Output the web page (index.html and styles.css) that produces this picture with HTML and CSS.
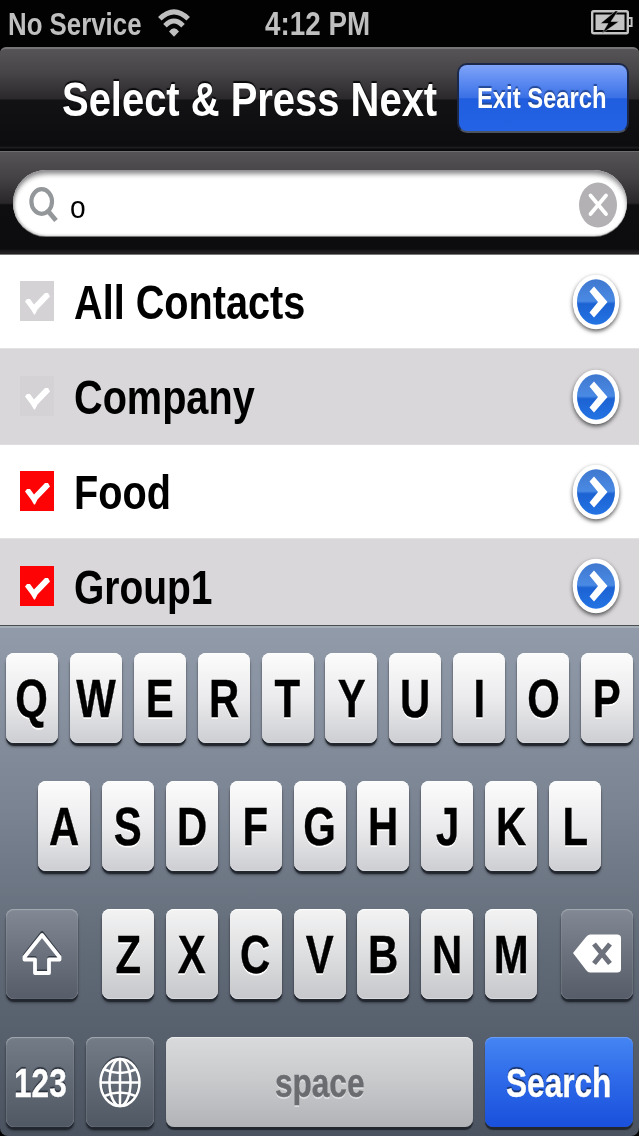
FILE: index.html
```html
<!DOCTYPE html>
<html lang="en">
<head>
<meta charset="utf-8">
<title>Select &amp; Press Next</title>
<link rel="stylesheet" href="styles.css">
</head>
<body>
<svg class="defs" aria-hidden="true">
  <defs>
    <linearGradient id="disc" x1="0" y1="0" x2="0" y2="1">
      <stop offset="0" stop-color="#3f78cf"/><stop offset=".48" stop-color="#4a8ae4"/>
      <stop offset=".54" stop-color="#1c62d3"/><stop offset="1" stop-color="#2474e4"/>
    </linearGradient>
    <symbol id="check" viewBox="0 0 34 40"><path d="M5 20.500l2-2.500h3l4 5.500 11-11.500h3l2 3.500-12.500 13-2.500 5h-1l-3-5z" fill="#fff"/></symbol>
    <symbol id="go" viewBox="0 0 56 66">
      <ellipse cx="28" cy="32" rx="23.3" ry="27.3" fill="#fff"/>
      <ellipse cx="28" cy="32" rx="19" ry="22.700" fill="url(#disc)"/>
      <path d="M21.500 21.500l4.500-5L39.500 32 26 47.500l-4.500-5L30 32z" fill="#fff"/>
    </symbol>
  </defs>
</svg>
<div class="screen">
  <header class="status">
    <span class="carrier"><span class="t">No Service</span></span>
    <svg class="wifi" viewBox="0 0 32 28"><g fill="none" stroke="#bfbfbf"><path d="M1.800 9.800Q16-4 30.200 9.800" stroke-width="5"/><path d="M7 16.700Q16 7.500 25 16.700" stroke-width="5"/></g><path d="M11 22.500Q16 16 21 22.500L16 27.800z" fill="#bfbfbf"/></svg>
    <span class="clock"><span class="t">4:12 PM</span></span>
    <svg class="battery" viewBox="0 0 42 25"><rect x="1.200" y="1.200" width="35.600" height="22" rx="1.500" fill="none" stroke="#c4c4c4" stroke-width="2.400"/><path d="M38 8h2.600v8H38" fill="none" stroke="#c4c4c4" stroke-width="2"/><path d="M4.500 4.500h29v15.500h-29z" fill="#c4c4c4"/><path d="M24.500 1L9.500 13.500h7.500L11 23.500l17-12h-8L27 1z" fill="#020203" stroke="#c4c4c4" stroke-width=".5"/></svg>
  </header>
  <nav class="nav">
    <h1 class="title"><span class="t">Select &amp; Press Next</span></h1>
    <button class="exit"><span class="t">Exit Search</span></button>
  </nav>
  <div class="searchbar">
    <div class="field">
      <svg class="glass" viewBox="0 0 30 37"><ellipse cx="12.700" cy="15.500" rx="10.300" ry="12.300" fill="none" stroke="#949799" stroke-width="4.200"/><path d="M19 25l8 9.500" stroke="#949799" stroke-width="4.800"/></svg>
      <span class="query"><span class="t">o</span></span>
      <svg class="clear" viewBox="0 0 38 46"><ellipse cx="19" cy="23" rx="19" ry="22.500" fill="#b3b1b4"/><path d="M11.500 13.500l15.500 18.500M27 13.500L11.500 32" stroke="#fff" stroke-width="3.800" stroke-linecap="round"/></svg>
    </div>
  </div>
  <main class="list">
    <div class="row"><svg class="box off"><use href="#check"/></svg><span class="name"><span class="t">All Contacts</span></span><svg class="go"><use href="#go"/></svg></div>
    <div class="row alt"><svg class="box off"><use href="#check"/></svg><span class="name"><span class="t">Company</span></span><svg class="go"><use href="#go"/></svg></div>
    <div class="row"><svg class="box on"><use href="#check"/></svg><span class="name"><span class="t">Food</span></span><svg class="go"><use href="#go"/></svg></div>
    <div class="row alt"><svg class="box on"><use href="#check"/></svg><span class="name"><span class="t group">Group1</span></span><svg class="go"><use href="#go"/></svg></div>
  </main>
  <section class="keyboard">
    <div class="keys">
      <div class="key"><span class="t">Q</span></div><div class="key"><span class="t">W</span></div><div class="key"><span class="t">E</span></div><div class="key"><span class="t">R</span></div><div class="key"><span class="t">T</span></div><div class="key"><span class="t">Y</span></div><div class="key"><span class="t">U</span></div><div class="key"><span class="t">I</span></div><div class="key"><span class="t">O</span></div><div class="key"><span class="t">P</span></div>
    </div>
    <div class="keys">
      <div class="key"><span class="t">A</span></div><div class="key"><span class="t">S</span></div><div class="key"><span class="t">D</span></div><div class="key"><span class="t">F</span></div><div class="key"><span class="t">G</span></div><div class="key"><span class="t">H</span></div><div class="key"><span class="t">J</span></div><div class="key"><span class="t">K</span></div><div class="key"><span class="t">L</span></div>
    </div>
    <div class="keys lower">
      <div class="key dark shift"><svg width="42" height="46" viewBox="0 0 42 46"><path d="M21 4L3.500 26.500V29H14v13.500h14V29h10.500v-2.500z" transform="translate(0 -2.500)" fill="none" stroke="#343b45" stroke-width="3" stroke-linejoin="round"/><path d="M21 4L3.500 26V28.500H14v13.500h14V28.500h10.500V26z" fill="none" stroke="#fff" stroke-width="3.800" stroke-linejoin="round"/></svg></div>
      <div class="key"><span class="t">Z</span></div><div class="key"><span class="t">X</span></div><div class="key"><span class="t">C</span></div><div class="key"><span class="t">V</span></div><div class="key"><span class="t">B</span></div><div class="key"><span class="t">N</span></div><div class="key"><span class="t">M</span></div>
      <div class="key dark delete"><svg width="50" height="40" viewBox="0 0 50 40"><path d="M1 19L14 3Q16 .500 18 .500H45Q49 .500 49 4V35Q49 38.500 45 38.500H18Q16 38.500 14 36z" fill="#fff"/><path d="M22 10l16 19.500M38 10L22 29.500" stroke="#6c717c" stroke-width="5"/></svg></div>
    </div>
    <div class="keys bottom">
      <div class="key dark num"><span class="t">123</span></div>
      <div class="key dark globe"><svg width="44" height="52" viewBox="0 0 44 52"><g fill="none" stroke="#3c434d" stroke-width="2" transform="translate(0 -2)"><ellipse cx="22" cy="26.500" rx="19.500" ry="23.500"/></g><g fill="none" stroke="#fff" stroke-width="2.500"><ellipse cx="22" cy="26.500" rx="19.500" ry="23.500"/><ellipse cx="22" cy="26.500" rx="10.500" ry="23.500"/><path d="M22 3v47M2.500 26.500h39M6.500 13.500Q22 20.500 37.500 13.500M6.500 40Q22 33 37.500 40"/></g></svg></div>
      <div class="key space"><span class="t">space</span></div>
      <div class="key go-key"><span class="t">Search</span></div>
    </div>
  </section>
</div>
</body>
</html>
```

FILE: styles.css
```css
* { box-sizing: border-box; }
body { margin: 0; background: #000; font-family: "Liberation Sans", Arial, sans-serif; font-weight: bold; }
.defs { position: absolute; width: 0; height: 0; }
.screen { width: 639px; height: 1136px; overflow: hidden; display: flex; flex-direction: column; }

/* Condensed lettering */
.t { display: inline-block; white-space: nowrap; line-height: 1; transform: scaleX(.82); transform-origin: left center; }

.status { height: 47px; flex: none; display: flex; align-items: center; padding: 0 6px 0 8px; background: #020203; color: #bfbfbf; }
.carrier { width: 149px; padding-top: 1px; font-size: 31.500px; }
.wifi { width: 32px; height: 28px; margin: -1px 0 0 1px; }
.clock { width: 116px; margin-left: 75px; font-size: 33.500px; }
.clock .t { transform: scaleX(.83); }
.battery { width: 42px; height: 25px; margin: -2px 0 0 auto; }

.nav {
  height: 104px; flex: none; display: flex; align-items: center; justify-content: space-between; padding: 0 10px 5px 62px;
  border-top: 2px solid #777578; border-radius: 6px 6px 0 0;
  background: linear-gradient(#565457 0, #464447 24%, #2a282b 49%, #121114 50%, #0d0c0f 95%, #222023 97%, #09080b 98%);
}
.title { margin: 0; padding-top: 2px; width: 390px; font-size: 49px; font-weight: bold; color: #fff; text-shadow: 0 -2px 1px #09080a; }
.title .t { transform: scaleX(.815); }
.exit {
  width: 172px; height: 70px; padding: 2px 0 0 18px; border: 2px solid #1c2848; border-bottom-color: #4c5361; border-radius: 10px;
  display: flex; align-items: center; color: #fff; font: bold 29px "Liberation Sans", Arial, sans-serif;
  background: linear-gradient(#7fa4f8 0, #5585ef 30%, #3a70e5 50%, #205edf 51%, #2463e5 100%); text-shadow: 0 -2px 1px #244998;
}

.searchbar {
  height: 104px; flex: none; padding: 18px 12px 18px 13px; border-top: 1px solid #6d6b6e; border-bottom: 1px solid #777;
  background: linear-gradient(#555356 0, #444245 25%, #29272a 50%, #0e0d10 52%, #0c0b0e 95%, #211f22 98%);
}
.field {
  height: 66px; border-radius: 34px; background: #fff; display: flex; align-items: center; padding: 0 10px 0 16px;
  box-shadow: inset 0 5px 5px -1px #8d8b8e, inset 1px 0 3px #aaa, 0 1px 0 #777;
}
.glass { width: 30px; height: 37px; margin-top: 2px; }
.query { width: 30px; margin: 8px 0 0 11px; color: #000; font-size: 32px; font-weight: normal; }
.query .t { transform: scaleX(.88); }
.clear { width: 38px; height: 46px; margin: 3px 0 0 auto; }

.list { height: 370px; flex: none; overflow: hidden; }
.row { height: 93px; display: flex; align-items: center; padding: 0 15px 0 20px; background: #fff; color: #000; }
.alt { height: 97px; background: #d9d7da; border-top: 1px solid #e4e2e5; border-bottom: 1px solid #dfdde0; }
.row:last-child { height: 95px; border-bottom: 0; }
.box { width: 34px; height: 40px; flex: none; margin-bottom: 1px; }
.off { background: #d4d2d5; }
.on { background: #fe0305; }
.name { margin-left: 20px; padding-top: 2px; font-size: 47.500px; }
.name .t { transform: scaleX(.835); }
.name .group { transform: scaleX(.82); }
.go { width: 56px; height: 66px; flex: none; margin: 2px 0 0 auto; filter: drop-shadow(0 2px 2px rgba(0,0,0,.65)); }

.keyboard {
  height: 511px; flex: none; padding: 27px 6px 0; border-top: 1px solid #4a4f52; border-radius: 0 0 8px 8px;
  display: flex; flex-direction: column; gap: 38px; box-shadow: inset 0 2px 0 #a7afb8;
  background: linear-gradient(#929ba9 0, #7b8492 35%, #606976 65%, #4a535f 100%);
}
.keys { display: flex; justify-content: center; gap: 11.900px; height: 90px; flex: none; }
.key {
  width: 52px; height: 90px; flex: none; border-radius: 8px; display: flex; align-items: center; justify-content: center;
  background: linear-gradient(#fcfcfd, #ebebed 50%, #cdced2); color: #000; font-size: 53px; text-shadow: 0 2px 0 #fff;
  box-shadow: 0 3px 1px #22272f, 0 4px 3px rgba(0,0,0,.35), inset 0 1px 0 #fff, inset 0 -1px 0 #dadbde;
}
.key .t { transform: scaleX(.79); transform-origin: center; -webkit-text-stroke: .4px currentColor; }
.lower .key { background: linear-gradient(#f3f3f4, #dedfe0 50%, #c6c7ca); }
.keyboard .dark { background: linear-gradient(#838994, #6b727d 50%, #565d69); color: #fff; box-shadow: 0 3px 1px #22272f, 0 4px 3px rgba(0,0,0,.3), inset 0 1px 1px #a5aab1, inset 0 0 1px #a5aab1; }
.shift { width: 72px; margin-right: 12px; }
.delete { width: 72px; margin-left: 12px; }
.bottom .key { font-size: 40px; }
.bottom .t { transform: scaleX(.79); padding-top: 2px; }
.num, .globe { width: 68px; }
.bottom .dark { background: linear-gradient(#747c88, #616975 50%, #505864); text-shadow: 0 -2px 1px #2b323c; }
.space { width: 307px; }
.bottom .space { background: linear-gradient(#d9dadb, #c8c9cb 50%, #b1b3b6); color: #6a6c70; text-shadow: 0 2px 0 #dedfe0; box-shadow: 0 3px 1px #22272f, inset 0 1px 0 #ececed; }
.bottom .go-key { width: 148px; color: #fff; background: linear-gradient(#4585f3, #2c68e8 50%, #1a50dc); text-shadow: 0 -2px 1px #163069; box-shadow: 0 3px 1px #22272f, inset 0 1px 0 #6a9df5; }
```
